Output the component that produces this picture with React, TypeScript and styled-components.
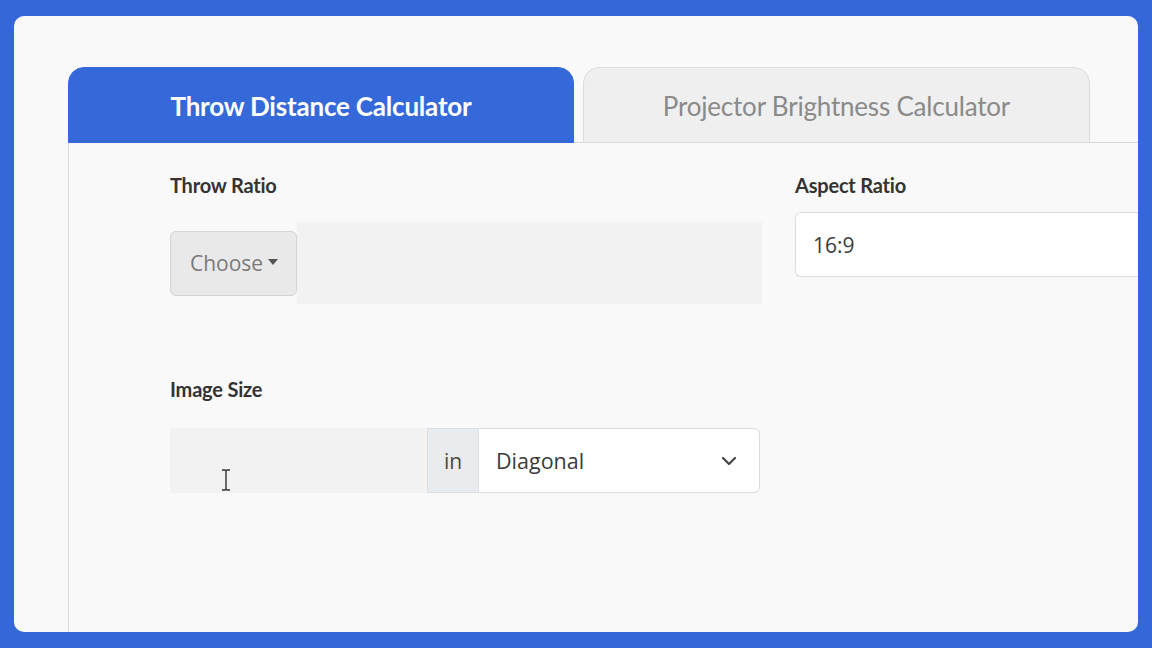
import styled, { createGlobalStyle } from "styled-components";
import { ChevronDown } from "lucide-react";

const GlobalStyle = createGlobalStyle`
  html, body {
    margin: 0;
    padding: 0;
    background: #3468d8;
  }
  body {
    width: 1152px;
    height: 648px;
    overflow: hidden;
    font-family: "Lato", "Noto Sans", sans-serif;
  }
`;

const Card = styled.div`
  margin: 16px 14px;
  width: 1124px;
  height: 616px;
  box-sizing: border-box;
  background: #f9f9f9;
  border-radius: 10px;
  overflow: hidden;
  padding: 51px 0 0 54px;
`;

const Tabs = styled.div`
  display: flex;
  gap: 9px;
  height: 76px;
`;

const Tab = styled.div<{ $active?: boolean }>`
  width: ${(p) => (p.$active ? "506px" : "507px")};
  box-sizing: border-box;
  display: flex;
  align-items: center;
  justify-content: center;
  border-radius: 16px 16px 0 0;
  font-size: 26px;
  font-weight: ${(p) => (p.$active ? 700 : 400)};
  letter-spacing: -0.2px;
  color: ${(p) => (p.$active ? "#ffffff" : "#8a8a8a")};
  background: ${(p) => (p.$active ? "#3569d9" : "#efefef")};
  border: 1px solid ${(p) => (p.$active ? "#3569d9" : "#dcdcdc")};
  position: relative;
  z-index: 1;
  padding-top: 2px;
`;

const Panel = styled.div`
  width: 1200px;
  height: 600px;
  margin-top: -1px;
  box-sizing: border-box;
  border-left: 1px solid #d9d9d9;
  border-top: 1px solid #d9d9d9;
  padding: 30px 0 0 101px;
`;

const Row = styled.div`
  display: grid;
  grid-template-columns: 592px 420px;
  column-gap: 33px;
  align-items: start;
`;

const Field = styled.div`
  display: flex;
  flex-direction: column;
`;

const Label = styled.label<{ $gap: number }>`
  font-size: 20px;
  font-weight: 700;
  line-height: 24px;
  letter-spacing: -0.2px;
  color: #333;
  margin-bottom: ${(p) => p.$gap}px;
`;

const ThrowGroup = styled.div`
  display: flex;
  align-items: center;
`;

const ChooseButton = styled.button`
  width: 127px;
  height: 65px;
  box-sizing: border-box;
  background: #e9e9e9;
  border: 1px solid #d4d4d4;
  border-radius: 6px;
  font-family: "Open Sans", "Noto Sans", sans-serif;
  font-size: 21px;
  color: #7a7a7a;
  display: flex;
  align-items: center;
  justify-content: center;
  gap: 5px;
  padding: 0 0 0 1px;
`;

const Caret = styled.span`
  width: 0;
  height: 0;
  border-left: 5px solid transparent;
  border-right: 5px solid transparent;
  border-top: 6px solid #555;
  margin-top: -2px;
`;

const ThrowInput = styled.div`
  flex: 1;
  height: 82px;
  background: #f2f2f2;
`;

const TextBox = styled.div`
  height: 65px;
  box-sizing: border-box;
  background: #ffffff;
  border: 1px solid #dcdcdc;
  border-right: none;
  border-radius: 6px 0 0 6px;
  display: flex;
  align-items: center;
  padding-left: 17px;
  font-family: "Open Sans", "Noto Sans", sans-serif;
  font-size: 21px;
  color: #3a3a3a;
`;

const SizeSection = styled.div`
  margin-top: 73px;
  display: flex;
  flex-direction: column;
`;

const SizeGroup = styled.div`
  width: 590px;
  height: 65px;
  display: flex;
`;

const SizeInput = styled.div`
  width: 257px;
  background: #f2f2f2;
  position: relative;
`;

const IBeam = styled.svg`
  position: absolute;
  left: 51px;
  top: 41px;
`;

const Addon = styled.div`
  width: 52px;
  box-sizing: border-box;
  background: #e9ecef;
  border: 1px solid #dcdfe3;
  display: flex;
  align-items: center;
  justify-content: center;
  font-family: "Open Sans", "Noto Sans", sans-serif;
  font-size: 21px;
  color: #4a4a4a;
`;

const Select = styled.div`
  flex: 1;
  box-sizing: border-box;
  background: #ffffff;
  border: 1px solid #dcdcdc;
  border-left: none;
  border-radius: 0 6px 6px 0;
  display: flex;
  align-items: center;
  justify-content: space-between;
  padding: 0 18px 0 17px;
  font-family: "Open Sans", "Noto Sans", sans-serif;
  font-size: 21.5px;
  color: #3a3a3a;
`;

export default function App() {
  return (
    <>
      <GlobalStyle />
      <Card>
        <Tabs>
          <Tab $active>Throw Distance Calculator</Tab>
          <Tab>Projector Brightness Calculator</Tab>
        </Tabs>
        <Panel>
          <Row>
            <Field>
              <Label $gap={25}>Throw Ratio</Label>
              <ThrowGroup>
                <ChooseButton>
                  Choose
                  <Caret />
                </ChooseButton>
                <ThrowInput />
              </ThrowGroup>
            </Field>
            <Field>
              <Label $gap={15}>Aspect Ratio</Label>
              <TextBox>16:9</TextBox>
            </Field>
          </Row>
          <SizeSection>
            <Label $gap={27}>Image Size</Label>
            <SizeGroup>
              <SizeInput>
                <IBeam width="10" height="22" viewBox="0 0 10 22">
                  <path
                    d="M1 1h3l1 1 1-1h3M5 2v18M1 21h3l1-1 1 1h3"
                    fill="none"
                    stroke="#333"
                    strokeWidth="1.4"
                  />
                </IBeam>
              </SizeInput>
              <Addon>in</Addon>
              <Select>
                Diagonal
                <ChevronDown size={24} strokeWidth={2.2} color="#444" />
              </Select>
            </SizeGroup>
          </SizeSection>
        </Panel>
      </Card>
    </>
  );
}
